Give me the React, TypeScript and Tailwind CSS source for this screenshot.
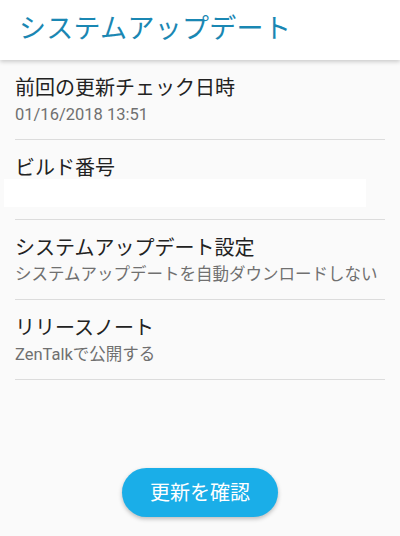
import React from "react";

const fontStack = "font-['Roboto','Noto_Sans_CJK_JP',sans-serif]";

type RowProps = { title: string; sub?: string; hidden?: boolean };

const SettingRow: React.FC<RowProps> = ({ title, sub, hidden }) => {
	return (
		<div className="mx-[15px] h-[80px] border-b border-[#dcdcdc] pt-[16px]">
			<div className="text-[20px] leading-[24px] text-[#222]">{title}</div>
			{sub && <div className="mt-[5px] text-[16.5px] leading-[20px] text-[#707070]">{sub}</div>}
			{/* build number is blanked out in the screenshot */}
			{hidden && <div className="-ml-[11px] mt-[-1px] h-[28px] w-[362px] bg-white"></div>}
		</div>
	);
};

export default function App() {
	return (
		<div className={`${fontStack} flex h-[536px] w-[400px] flex-col overflow-hidden bg-[#fafafa]`}>
			{/* HEADER */}
			<div className="relative z-10 flex h-[60px] items-center bg-white pl-[19px] pb-[1px] shadow-[0_2px_4px_rgba(0,0,0,0.18)]">
				<span className="text-[27px] leading-none tracking-[0.3px] text-[#1a87b3]">システムアップデート</span>
			</div>

			{/* LIST */}
			<div>
				<SettingRow title="前回の更新チェック日時" sub="01/16/2018 13:51" />
				<SettingRow title="ビルド番号" hidden />
				<SettingRow title="システムアップデート設定" sub="システムアップデートを自動ダウンロードしない" />
				<SettingRow title="リリースノート" sub="ZenTalkで公開する" />
			</div>

			{/* ACTION */}
			<div className="mt-auto mb-[19px] flex justify-center">
				<button className="h-[49px] w-[156px] rounded-full bg-[#1aaee8] text-[20px] text-white shadow-[0_2px_4px_rgba(0,0,0,0.25)]">
					更新を確認
				</button>
			</div>
		</div>
	);
}
